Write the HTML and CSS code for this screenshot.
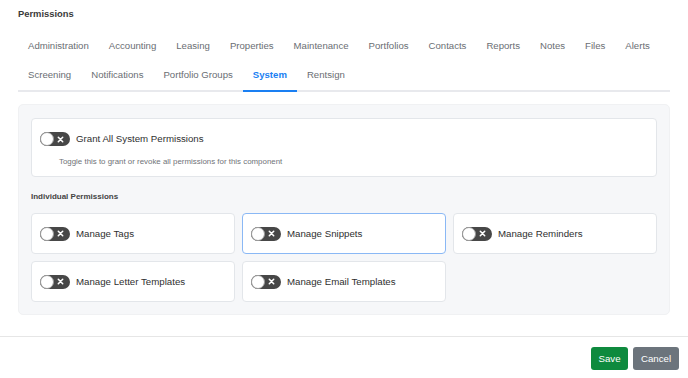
FILE: index.html
```html
<!DOCTYPE html>
<html lang="en">

<head>
    <meta charset="UTF-8">
    <meta name="viewport" content="width=device-width, initial-scale=1.0">
    <title>Permissions</title>
    <link rel="stylesheet" href="styles.css">
</head>

<body>
    <div class="page">
        <h1 class="title">Permissions</h1>

        <nav class="tabs">
            <a href="#">Administration</a>
            <a href="#">Accounting</a>
            <a href="#">Leasing</a>
            <a href="#">Properties</a>
            <a href="#">Maintenance</a>
            <a href="#">Portfolios</a>
            <a href="#">Contacts</a>
            <a href="#">Reports</a>
            <a href="#">Notes</a>
            <a href="#">Files</a>
            <a href="#">Alerts</a>
            <a href="#">Screening</a>
            <a href="#">Notifications</a>
            <a href="#">Portfolio Groups</a>
            <a href="#" class="active">System</a>
            <a href="#">Rentsign</a>
        </nav>

        <div class="panel">
            <div class="grant-card">
                <label class="perm">
                    <span class="toggle"><svg viewBox="0 0 8 8" width="7" height="7"><path d="M1.5 1.5 L6.5 6.5 M6.5 1.5 L1.5 6.5" stroke="#fff" stroke-width="1.8" stroke-linecap="round"/></svg></span>
                    <span class="perm-label">Grant All System Permissions</span>
                </label>
                <p class="hint">Toggle this to grant or revoke all permissions for this component</p>
            </div>

            <h2 class="section-title">Individual Permissions</h2>

            <div class="perm-grid">
                <label class="perm perm-card">
                    <span class="toggle"><svg viewBox="0 0 8 8" width="7" height="7"><path d="M1.5 1.5 L6.5 6.5 M6.5 1.5 L1.5 6.5" stroke="#fff" stroke-width="1.8" stroke-linecap="round"/></svg></span>
                    <span class="perm-label">Manage Tags</span>
                </label>
                <label class="perm perm-card focused">
                    <span class="toggle"><svg viewBox="0 0 8 8" width="7" height="7"><path d="M1.5 1.5 L6.5 6.5 M6.5 1.5 L1.5 6.5" stroke="#fff" stroke-width="1.8" stroke-linecap="round"/></svg></span>
                    <span class="perm-label">Manage Snippets</span>
                </label>
                <label class="perm perm-card">
                    <span class="toggle"><svg viewBox="0 0 8 8" width="7" height="7"><path d="M1.5 1.5 L6.5 6.5 M6.5 1.5 L1.5 6.5" stroke="#fff" stroke-width="1.8" stroke-linecap="round"/></svg></span>
                    <span class="perm-label">Manage Reminders</span>
                </label>
                <label class="perm perm-card">
                    <span class="toggle"><svg viewBox="0 0 8 8" width="7" height="7"><path d="M1.5 1.5 L6.5 6.5 M6.5 1.5 L1.5 6.5" stroke="#fff" stroke-width="1.8" stroke-linecap="round"/></svg></span>
                    <span class="perm-label">Manage Letter Templates</span>
                </label>
                <label class="perm perm-card">
                    <span class="toggle"><svg viewBox="0 0 8 8" width="7" height="7"><path d="M1.5 1.5 L6.5 6.5 M6.5 1.5 L1.5 6.5" stroke="#fff" stroke-width="1.8" stroke-linecap="round"/></svg></span>
                    <span class="perm-label">Manage Email Templates</span>
                </label>
            </div>
        </div>
    </div>

    <footer class="footer">
        <button class="btn btn-save">Save</button>
        <button class="btn btn-cancel">Cancel</button>
    </footer>
</body>
</html>
```

FILE: styles.css
```css
body {
    font-family: 'Liberation Sans', Arial, sans-serif;
    font-size: 9.6px;
    color: #333;
    background-color: #ffffff;
    margin: 0;
    padding: 0;
}

.page {
    padding: 8px 18px 0;
}

.title {
    font-size: 9.4px;
    font-weight: 700;
    color: #3a3a3a;
    line-height: 12px;
    margin: 0;
}

/* Tabs */
.tabs {
    display: flex;
    flex-wrap: wrap;
    margin-top: 11px;
    border-bottom: 2px solid #e8e9ed;
}

.tabs a {
    display: block;
    padding: 9px 10px 8px;
    line-height: 12px;
    color: #6a6e73;
    text-decoration: none;
}

.tabs a:nth-child(n+12) {
    padding: 9px 10px;
}

.tabs a.active {
    color: #1a7ff2;
    font-weight: 700;
    border-bottom: 2px solid #1a7ff2;
    margin-bottom: -2px;
}

/* Panel */
.panel {
    margin-top: 12px;
    padding: 13px 12px 12px;
    background-color: #f6f7f9;
    border: 1px solid #f0f1f3;
    border-radius: 5px;
}

.grant-card {
    background-color: #ffffff;
    border: 1px solid #e3e6ea;
    border-radius: 4px;
    padding: 13px 8px 9px;
}

.perm {
    display: flex;
    align-items: center;
    gap: 6px;
}

.perm-label {
    font-size: 9.7px;
    color: #2f2f2f;
    line-height: 14px;
}

.hint {
    margin: 11px 0 0 19px;
    font-size: 7.9px;
    line-height: 10px;
    color: #6f7378;
}

.toggle {
    position: relative;
    display: inline-flex;
    align-items: center;
    justify-content: flex-end;
    width: 30px;
    height: 14px;
    padding-right: 6px;
    box-sizing: border-box;
    background-color: #474747;
    border-radius: 7px;
    flex-shrink: 0;
}

.toggle::before {
    content: "";
    position: absolute;
    left: 0;
    top: 0;
    width: 12px;
    height: 12px;
    border: 1px solid #9a9a9a;
    border-radius: 50%;
    background-color: #ffffff;
}

.section-title {
    font-size: 8px;
    font-weight: 700;
    color: #444;
    line-height: 10px;
    margin: 15px 0 0;
}

.perm-grid {
    display: grid;
    grid-template-columns: repeat(3, 1fr);
    gap: 7px;
    margin-top: 11px;
}

.perm-card {
    height: 41px;
    box-sizing: border-box;
    padding: 0 8px;
    background-color: #ffffff;
    border: 1px solid #e3e6ea;
    border-radius: 4px;
}

.perm-card.focused {
    border-color: #8ab8f5;
}

/* Footer */
.footer {
    margin-top: 21px;
    border-top: 1px solid #e6e6e6;
    display: flex;
    justify-content: flex-end;
    gap: 5px;
    padding: 10px 9px 0;
}

.btn {
    font-family: 'Liberation Sans', Arial, sans-serif;
    font-size: 9.7px;
    color: #ffffff;
    border: none;
    border-radius: 3px;
    height: 23px;
    padding: 0 5px;
    cursor: pointer;
}

.btn-save {
    background-color: #0e8a3e;
    width: 37px;
}

.btn-cancel {
    background-color: #6c747c;
    width: 46px;
}
```
